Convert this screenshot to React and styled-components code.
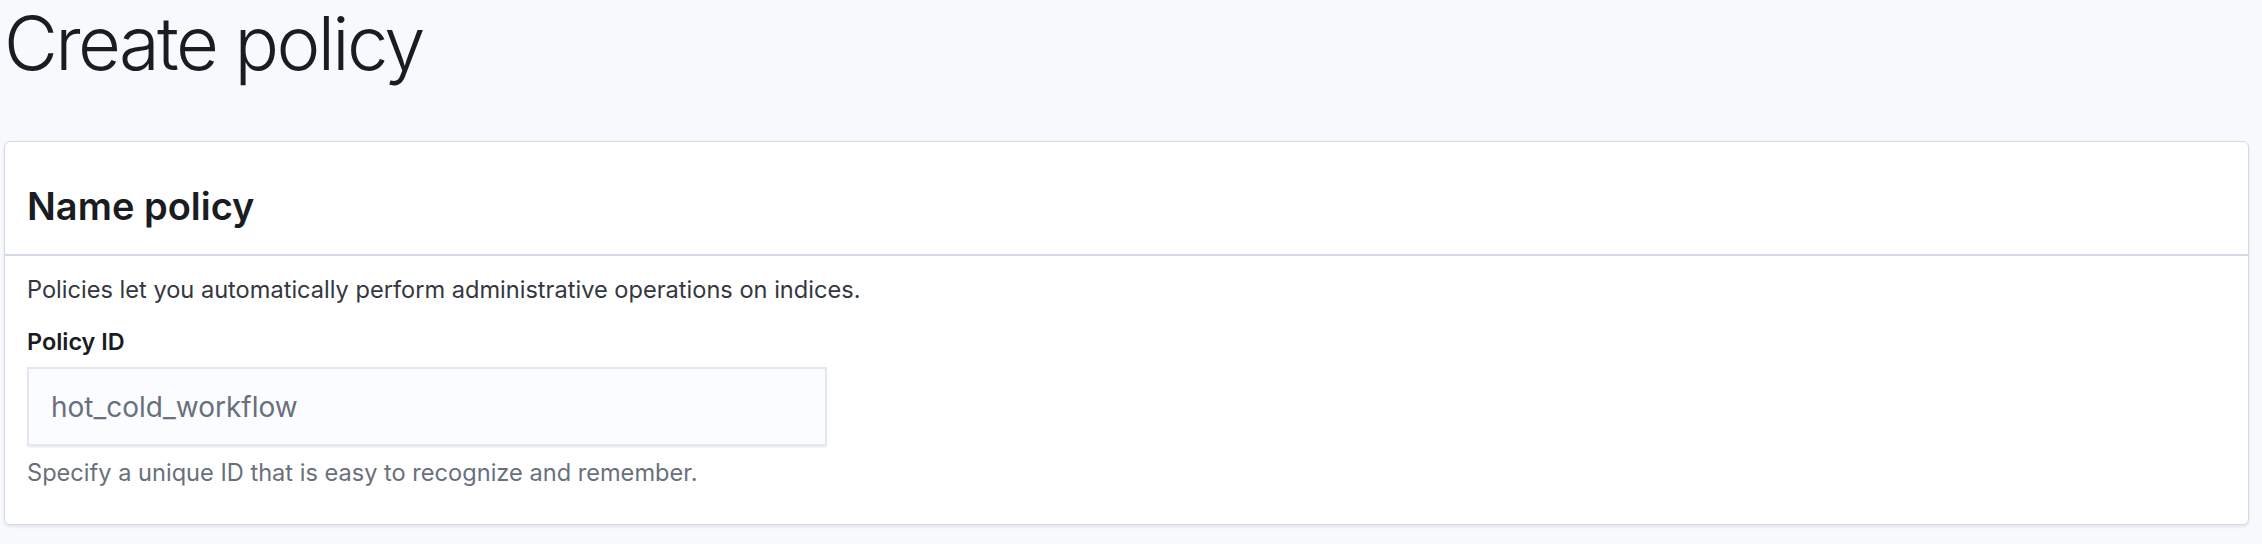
import React from "react";
import styled, { createGlobalStyle } from "styled-components";

const GlobalStyle = createGlobalStyle`
  html, body {
    margin: 0;
    padding: 0;
    background: #f8f9fc;
  }
  body {
    font-family: Inter, "Noto Sans", sans-serif;
    color: #343741;
  }
`;

const Page = styled.div`
  padding: 0 13px 21px 4px;
  background: #f8f9fc;
  min-height: 544px;
  box-sizing: border-box;
`;

const PageTitle = styled.h1`
  margin: 0 0 55px 0;
  font-size: 74px;
  line-height: 86px;
  font-weight: 300;
  color: #1a1c21;
  letter-spacing: -2.6px;
`;

const Panel = styled.section`
  background: #fff;
  border: 1px solid #d3dae6;
  border-radius: 6px;
  box-shadow: 0 2px 3px rgba(152, 162, 179, 0.2);
`;

const PanelHeader = styled.div`
  padding: 40px 22px 24px;
  border-bottom: 2px solid #d3dae6;
`;

const PanelTitle = styled.h2`
  margin: 0;
  font-size: 38px;
  line-height: 48px;
  font-weight: 600;
  color: #1a1c21;
`;

const PanelBody = styled.div`
  padding: 19px 22px 36px;
`;

const Description = styled.p`
  margin: 0 0 22px;
  font-size: 23.6px;
  line-height: 30px;
  color: #343741;
`;

const Field = styled.div`
  display: flex;
  flex-direction: column;
  gap: 10px;
  max-width: 800px;
`;

const Label = styled.label`
  font-size: 23.4px;
  line-height: 30px;
  font-weight: 600;
  color: #1a1c21;
`;

const Input = styled.input`
  box-sizing: border-box;
  width: 800px;
  height: 79px;
  padding: 0 22px;
  font-family: inherit;
  font-size: 28px;
  color: #69707d;
  background: #fbfcfd;
  border: 2px solid #e4e7f0;
  border-radius: 0;
  box-shadow: 0 2px 2px -1px rgba(152, 162, 179, 0.3);
  outline: none;
`;

const HelpText = styled.div`
  margin-top: 2px;
  font-size: 23.6px;
  line-height: 30px;
  color: #69707d;
`;

export default function App() {
  return (
    <>
      <GlobalStyle />
      <Page>
        <PageTitle>Create policy</PageTitle>
        <Panel>
          <PanelHeader>
            <PanelTitle>Name policy</PanelTitle>
          </PanelHeader>
          <PanelBody>
            <Description>
              Policies let you automatically perform administrative operations on indices.
            </Description>
            <Field>
              <Label htmlFor="policyId">Policy ID</Label>
              <Input id="policyId" defaultValue="hot_cold_workflow" readOnly />
              <HelpText>Specify a unique ID that is easy to recognize and remember.</HelpText>
            </Field>
          </PanelBody>
        </Panel>
      </Page>
    </>
  );
}
